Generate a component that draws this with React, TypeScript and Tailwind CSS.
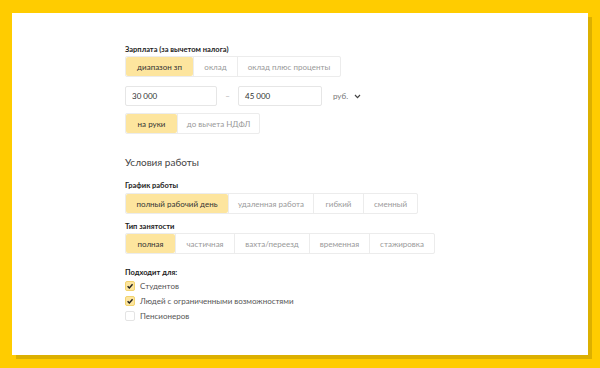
import React from 'react';

const FONT = "font-['Lato','Noto_Sans',sans-serif]";

function Segmented({ items, active, widths }: { items: string[]; active: number; widths: number[] }) {
  return (
    <div className="flex h-[21px] w-fit rounded-[2px] border border-[#ececec]">
      {items.map((item, i) => (
        <div
          key={item}
          style={{ width: widths[i] }}
          className={
            'flex items-center justify-center text-[8px] ' +
            (i === active
              ? 'bg-[#fde59e] text-[#333] rounded-[2px]'
              : 'text-[#999] ' + (i > 0 ? 'border-l border-[#ececec]' : ''))
          }
        >
          {item}
        </div>
      ))}
    </div>
  );
}

function Check({ checked, label }: { checked: boolean; label: string }) {
  return (
    <div className="flex items-center gap-[5px] h-[14px]">
      <div
        className={
          'w-[10px] h-[10px] rounded-[2px] flex items-center justify-center ' +
          (checked ? 'bg-[#fde59e] border border-[#f2d36e]' : 'border border-[#e4e4e4] bg-white')
        }
      >
        {checked && (
          <svg width="8" height="8" viewBox="0 0 10 10">
            <path d="M2 5.2 L4.2 7.4 L8.2 2.8" fill="none" stroke="#222" strokeWidth="1.8" />
          </svg>
        )}
      </div>
      <span className="text-[8px] text-[#555]">{label}</span>
    </div>
  );
}

export default function App() {
  return (
    <div className={`w-[600px] h-[368px] bg-[#ffcc00] pt-[13px] pl-[12px] ${FONT}`}>
      <div className="w-[576px] h-[342px] bg-white shadow-[4px_4px_0_#dcb000] pl-[113px] pt-[32px]">
        <div className="text-[7.5px] font-bold text-[#222] leading-[10px]">Зарплата (за вычетом налога)</div>
        <div className="mt-[1px]">
          <Segmented items={['диапазон зп', 'оклад', 'оклад плюс проценты']} active={0} widths={[67, 44, 103]} />
        </div>
        <div className="flex items-center mt-[9px] h-[20px]">
          <div className="w-[92px] h-[20px] border border-[#e6e6e6] rounded-[2px] flex items-center pl-[6px] text-[8px] text-[#333]">30 000</div>
          <div className="w-[21px] text-center text-[8px] text-[#aaa]">–</div>
          <div className="w-[84px] h-[20px] border border-[#e6e6e6] rounded-[2px] flex items-center pl-[6px] text-[8px] text-[#333]">45 000</div>
          <div className="ml-[11px] text-[8px] text-[#777]">руб.</div>
          <svg className="ml-[6px]" width="7" height="5" viewBox="0 0 7 5">
            <path d="M1 1 L3.5 3.6 L6 1" fill="none" stroke="#444" strokeWidth="1.2" />
          </svg>
        </div>
        <div className="mt-[7px]">
          <Segmented items={['на руки', 'до вычета НДФЛ']} active={0} widths={[51, 82]} />
        </div>
        <div className="mt-[22px] text-[10px] text-[#444] leading-[12px]">Условия работы</div>
        <div className="mt-[13px] text-[7.5px] font-bold text-[#222] leading-[10px]">График работы</div>
        <div className="mt-[2px]">
          <Segmented
            items={['полный рабочий день', 'удаленная работа', 'гибкий', 'сменный']}
            active={0}
            widths={[102, 85, 50, 54]}
          />
        </div>
        <div className="mt-[8px] text-[7.5px] font-bold text-[#222] leading-[10px]">Тип занятости</div>
        <div className="mt-[1px]">
          <Segmented
            items={['полная', 'частичная', 'вахта/переезд', 'временная', 'стажировка']}
            active={0}
            widths={[49, 59, 75, 60, 65]}
          />
        </div>
        <div className="mt-[14px] text-[7.5px] font-bold text-[#222] leading-[10px]">Подходит для:</div>
        <div className="mt-[1px] flex flex-col gap-[1px]">
          <Check checked label="Студентов" />
          <Check checked label="Людей с ограниченными возможностями" />
          <Check checked={false} label="Пенсионеров" />
        </div>
      </div>
    </div>
  );
}
